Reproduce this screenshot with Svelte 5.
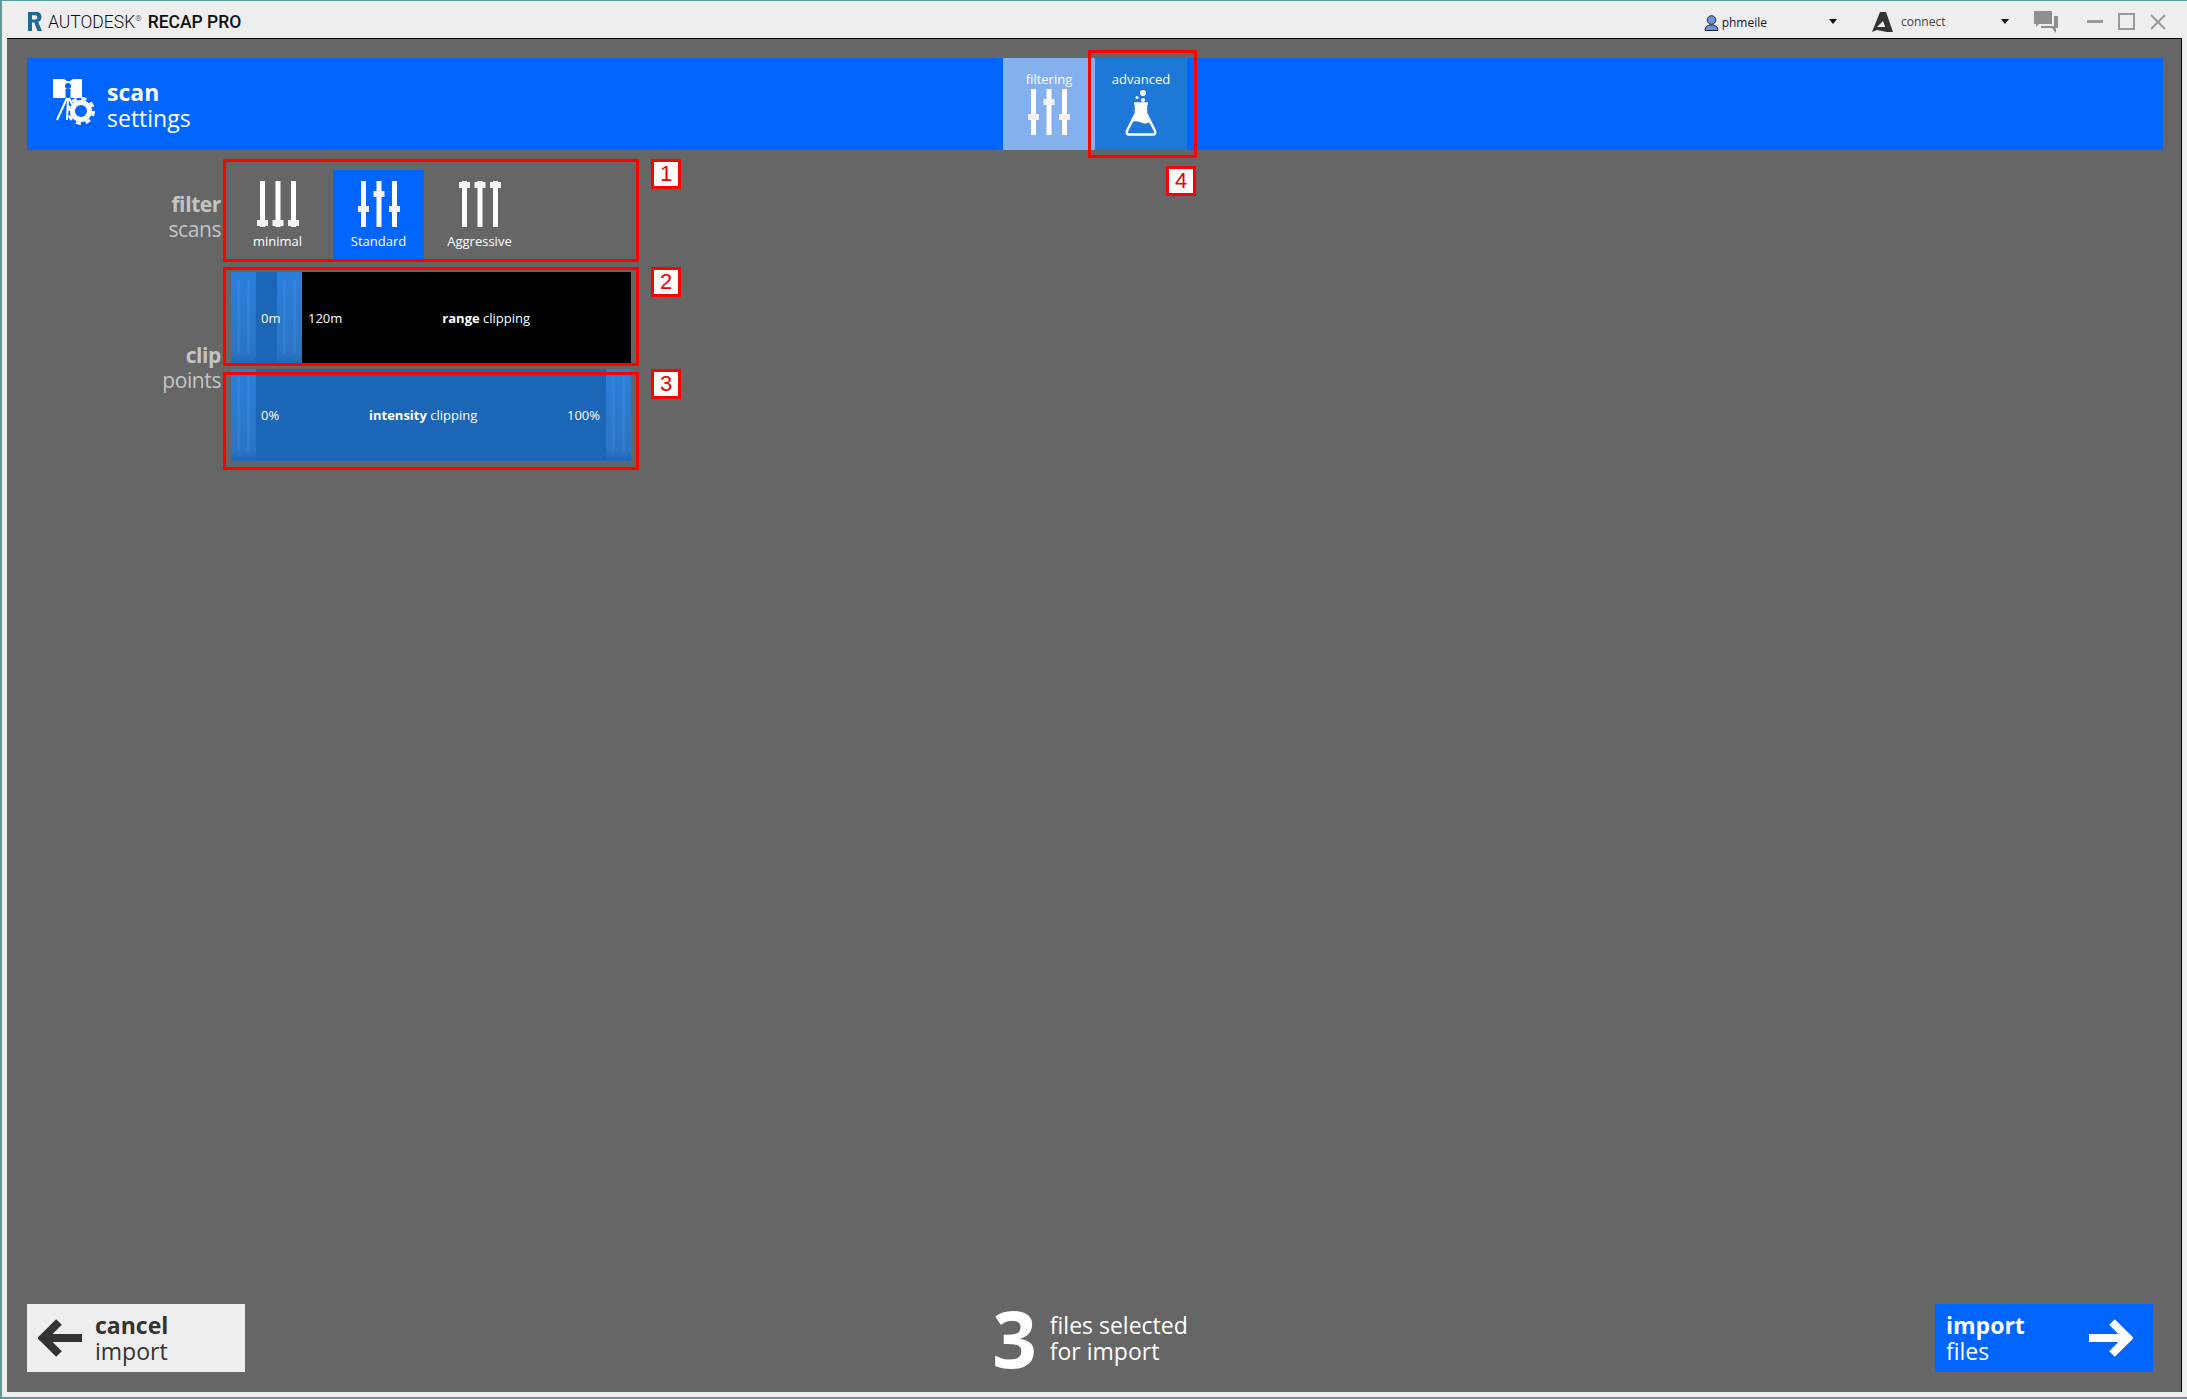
<script>
  const filters = [
    { label: 'minimal', knobs: [42, 42, 42] },
    { label: 'Standard', knobs: [28, 13, 28], active: true },
    { label: 'Aggressive', knobs: [4, 4, 4] }
  ];
  const marks = [
    { n: 1, cls: 'm1' },
    { n: 2, cls: 'm2' },
    { n: 3, cls: 'm3' },
    { n: 4, cls: 'm4' }
  ];
  const bars = [5.5, 21, 36.5];
</script>

{#snippet sliders(knobs)}
  <svg class="sliders" viewBox="0 0 42 46" aria-hidden="true">
    {#each bars as x, i}
      <rect x={x - 2.5} y="0" width="5" height="46" fill="#fff" />
      <rect x={x - 5.5} y={knobs[i] - 3} width="11" height="6" fill="#f2f2f2" />
    {/each}
  </svg>
{/snippet}

<div class="window">
  <div class="frame">
    <header class="titlebar">
      <div class="brand">
        <svg class="r-logo" viewBox="0 0 15 19" aria-hidden="true">
          <path d="M1 0h8.500c3.500 0 5 2.200 5 5 0 2.600-1.300 4.300-3.300 4.900L15 19h-4.600L7.300 10.500H5V19H1z M5 3.200v4.300h3.300c1.300 0 2-.9 2-2.200s-.7-2.100-2-2.100z" fill="#1d6a94" fill-rule="evenodd" />
        </svg>
        <span class="brand-thin">AUTODESK<sup>®</sup></span>
        <span class="brand-bold">RECAP PRO</span>
      </div>
      <div class="win-tools">
        <div class="user">
          <svg class="person" viewBox="0 0 15 16" aria-hidden="true">
            <circle cx="7.500" cy="5" r="4.300" fill="#6c93d8" stroke="#223" />
            <path d="M1 15.500c0-4 2.500-5.500 6.500-5.500s6.500 1.500 6.500 5.500z" fill="#6c93d8" stroke="#223" />
          </svg>
          <span>phmeile</span>
        </div>
        <i class="caret caret-a"></i>
        <svg class="a360" viewBox="0 0 21 20" aria-hidden="true">
          <path d="M8 0h6l7 20h-6L11 9 5 15l9 0 1 5-10-2-5 2z" fill="#333" />
        </svg>
        <span class="connect">connect</span>
        <i class="caret caret-b"></i>
        <svg class="chat" viewBox="0 0 24 22" aria-hidden="true">
          <path d="M0 0h18v13H5l-3 3v-3H0z" fill="#8f8f8f" />
          <path d="M20 5h4v12h-2v5l-4-5H7v-2h13z" fill="#8f8f8f" />
        </svg>
        <i class="min"></i>
        <i class="max"></i>
        <svg class="close" viewBox="0 0 16 16" aria-hidden="true">
          <path d="M1 1l14 14M15 1L1 15" stroke="#999" stroke-width="2" fill="none" />
        </svg>
      </div>
    </header>

    <main class="content">
      <section class="banner">
        <svg class="scan-icon" viewBox="0 0 44 52" aria-hidden="true">
          <path d="M1 1h11l3 2h3l3-2h9v19H1z" fill="#fff" />
          <circle cx="16" cy="8" r="3" fill="#06f" />
          <rect x="13.500" y="11" width="5" height="9" fill="#06f" />
          <path d="M15 20L5 42M16 20l-1 22M17 20l5 10" stroke="#fff" stroke-width="2" fill="none" />
          <circle cx="29" cy="33" r="8.500" fill="none" stroke="#fff" stroke-width="5" />
          <circle cx="29" cy="33" r="12.500" fill="none" stroke="#fff" stroke-width="3" stroke-dasharray="5 4.820" />
        </svg>
        <div class="two-line banner-title">
          <b>scan</b>
          <span>settings</span>
        </div>
        <nav class="tabs">
          <div class="tab tab-filtering">
            <span>filtering</span>
            {@render sliders([28, 13, 28])}
          </div>
          <div class="tab tab-advanced">
            <span>advanced</span>
            <svg class="flask" viewBox="0 0 32 46" aria-hidden="true">
              <circle cx="18" cy="3" r="3" fill="#fff" />
              <circle cx="18" cy="10" r="2" fill="#fff" />
              <circle cx="12" cy="7.500" r="1.500" fill="#fff" />
              <path d="M9 13.500h14" stroke="#fff" stroke-width="2.500" />
              <path d="M11 14v9L2 41q-1 3.500 2 3.500h24q3 0 2-3.500L21 23v-9" fill="none" stroke="#fff" stroke-width="2.500" />
              <path d="M11 14h10v9l4.500 9q-5 2.500-9.500 .5t-9.500-.5L11 23z" fill="#fff" />
            </svg>
          </div>
        </nav>
      </section>

      <div class="settings">
        <div class="row row-filter">
          <div class="two-line side-label">
            <b>filter</b>
            <span>scans</span>
          </div>
          <div class="options">
            {#each filters as f}
              <div class="option" class:active={f.active}>
                {@render sliders(f.knobs)}
                <span>{f.label}</span>
              </div>
            {/each}
          </div>
        </div>

        <div class="row row-clip">
          <div class="two-line side-label clip-label">
            <b>clip</b>
            <span>points</span>
          </div>
          <div class="clips">
            <div class="clip range">
              <div class="range-fill">
                <i class="handle"></i>
                <span class="val-low">0m</span>
                <i class="handle"></i>
              </div>
              <span class="val-max">120m</span>
              <span class="clip-name range-name"><b>range</b> clipping</span>
            </div>
            <div class="clip intensity">
              <i class="handle"></i>
              <span class="val-low">0%</span>
              <span class="clip-name intensity-name"><b>intensity</b> clipping</span>
              <span class="val-high">100%</span>
              <i class="handle"></i>
            </div>
          </div>
        </div>
      </div>

      <footer class="actions">
        <button class="action cancel">
          <svg class="arrow" viewBox="0 0 44 38" aria-hidden="true">
            <path d="M44 19H5M21 3L5 19l16 16" fill="none" stroke="#333" stroke-width="8" />
          </svg>
          <span class="two-line"><b>cancel</b><span>import</span></span>
        </button>
        <div class="count">
          <b>3</b>
          <span class="two-line"><span>files selected</span><span>for import</span></span>
        </div>
        <button class="action go">
          <span class="two-line"><b>import</b><span>files</span></span>
          <svg class="arrow" viewBox="0 0 44 38" aria-hidden="true">
            <path d="M0 19h39M23 3l16 16-16 16" fill="none" stroke="#fff" stroke-width="8" />
          </svg>
        </button>
      </footer>

      {#each marks as m}
        <div class="mark-box {m.cls}"></div>
        <div class="mark-tag {m.cls}">{m.n}</div>
      {/each}
    </main>
  </div>
</div>

<style>
  :global(body) {
    margin: 0;
    background: #4a3b2a;
  }

  .window {
    width: 2187px;
    height: 1399px;
    box-sizing: border-box;
    padding: 1px 0 2px 2px;
    background: #5a9a9a;
    display: flex;
    font-family: "Open Sans", "Noto Sans", sans-serif;
    overflow: hidden;
  }

  .frame {
    flex: 1;
    min-width: 0;
    background: #eee;
    display: flex;
    flex-direction: column;
  }

  .titlebar {
    height: 37px;
    flex: none;
    box-sizing: border-box;
    padding-top: 4px;
    display: flex;
    justify-content: space-between;
    align-items: center;
  }

  .brand {
    display: flex;
    align-items: center;
    padding-left: 25px;
    color: #111;
    font-family: "Roboto", sans-serif;
    font-size: 17.500px;
    line-height: 20px;
  }

  .r-logo {
    width: 15px;
    height: 19px;
    margin-right: 6px;
  }

  .brand-thin {
    font-weight: 300;
    margin-right: 6px;
  }

  .brand-thin sup {
    font-size: 8px;
    line-height: 0;
  }

  .brand-bold {
    font-weight: 500;
  }

  .win-tools {
    display: flex;
    align-items: center;
    height: 100%;
    padding-right: 21px;
  }

  .user {
    display: flex;
    align-items: center;
    gap: 3px;
    font-size: 12px;
    color: #201028;
    padding-top: 2px;
  }

  .person {
    width: 15px;
    height: 16px;
  }

  .caret {
    width: 0;
    height: 0;
    border-left: 4.500px solid transparent;
    border-right: 4.500px solid transparent;
    border-top: 5px solid #111;
  }

  .caret-a {
    margin: 0 35px 0 62px;
  }

  .caret-b {
    margin: 0 25px 0 55px;
  }

  .a360 {
    width: 21px;
    height: 20px;
    margin-right: 8px;
  }

  .connect {
    font-size: 12px;
    color: #444;
    width: 45px;
    white-space: nowrap;
  }

  .chat {
    width: 24px;
    height: 22px;
    margin-right: 29px;
  }

  .min {
    width: 16px;
    height: 3px;
    background: #999;
    margin-right: 15px;
  }

  .max {
    width: 13px;
    height: 13px;
    border: 2px solid #999;
    margin-right: 15px;
  }

  .close {
    width: 16px;
    height: 16px;
  }

  .content {
    position: relative;
    flex: 1;
    min-height: 0;
    margin: 0 5px 5px 5px;
    border-top: 1px solid #000;
    border-right: 1px solid #000;
    background: #666;
    padding: 19px 18px 20px 20px;
    display: flex;
    flex-direction: column;
    box-sizing: border-box;
  }

  .two-line {
    display: flex;
    flex-direction: column;
    font-size: 23px;
    line-height: 26px;
  }

  .two-line b {
    font-weight: 700;
  }

  .banner {
    height: 92px;
    flex: none;
    display: flex;
    align-items: center;
    background: #0066ff;
    color: #fff;
    padding-left: 25px;
  }

  .scan-icon {
    width: 44px;
    height: 52px;
    margin-right: 11px;
  }

  .banner-title {
    width: 896px;
    padding-top: 2px;
  }

  .tabs {
    display: flex;
    align-self: stretch;
  }

  .tab {
    display: flex;
    flex-direction: column;
    align-items: center;
    box-sizing: border-box;
    width: 92px;
    font-size: 13px;
    padding-top: 11px;
    line-height: 20px;
  }

  .tab-filtering {
    background: #84b1ee;
  }

  .tab-advanced {
    background: #1e78d8;
  }

  .sliders {
    width: 42px;
    height: 46px;
  }

  .flask {
    width: 32px;
    height: 46px;
    margin-top: 1px;
  }

  .settings {
    display: flex;
    flex-direction: column;
    margin-top: 20px;
  }

  .row {
    display: flex;
  }

  .side-label {
    width: 194px;
    align-items: flex-end;
    color: #c4c4c4;
    font-size: 21px;
    line-height: 25px;
    padding-top: 22px;
    flex: none;
    letter-spacing: -0.4px;
  }

  .clip-label {
    padding-top: 83px;
  }

  .options {
    display: flex;
    margin-left: 11px;
    gap: 10px;
  }

  .option {
    width: 91px;
    height: 90px;
    box-sizing: border-box;
    padding-top: 11px;
    display: flex;
    flex-direction: column;
    align-items: center;
    color: #fff;
    font-size: 13px;
    line-height: 18px;
    gap: 5px;
  }

  .option.active {
    background: #0066ff;
  }

  .clips {
    display: flex;
    flex-direction: column;
    width: 400px;
    margin-left: 10px;
    margin-top: 12px;
    gap: 5px;
    color: #fff;
    font-size: 13px;
  }

  .clip {
    display: flex;
    align-items: center;
    height: 92px;
  }

  .clip b {
    font-weight: 700;
  }

  .range {
    background: #000;
  }

  .range-fill {
    width: 71px;
    height: 100%;
    display: flex;
    align-items: center;
    justify-content: space-between;
    background: #1b66b7;
    flex: none;
  }

  .intensity {
    background: #1b66b7;
  }

  .handle {
    width: 25px;
    height: 100%;
    flex: none;
    background:
      linear-gradient(to right, rgba(255, 255, 255, 0.05) 3px, transparent 3px, transparent 10px, rgba(255, 255, 255, 0.05) 10px) 6px 8px / 13px calc(100% - 18px) no-repeat,
      linear-gradient(to bottom, #2a7fdc, #2b74c6 88%, #1e67b8);
  }

  .val-low {
    width: 21px;
    white-space: nowrap;
  }

  .range-fill .val-low {
    margin-left: 5px;
    margin-right: -5px;
    position: relative;
  }

  .intensity .val-low {
    margin-left: 5px;
  }

  .val-max {
    margin-left: 6px;
  }

  .clip-name {
    white-space: nowrap;
  }

  .range-name {
    margin-left: 100px;
  }

  .intensity-name {
    margin-left: 87px;
  }

  .val-high {
    margin-left: auto;
    margin-right: 6px;
  }

  .actions {
    margin-top: auto;
    display: flex;
    justify-content: space-between;
    align-items: center;
    padding-right: 10px;
  }

  .action {
    width: 218px;
    height: 68px;
    border: 0;
    padding: 0 20px 0 11px;
    display: flex;
    align-items: center;
    font-family: inherit;
    text-align: left;
  }

  .cancel {
    background: #eee;
    color: #333;
    gap: 13px;
  }

  .go {
    background: #0066ff;
    color: #fff;
    justify-content: space-between;
  }

  .arrow {
    width: 44px;
    height: 38px;
    flex: none;
  }

  .count {
    display: flex;
    align-items: center;
    color: #fff;
    gap: 13px;
  }

  .count > b {
    font-size: 78px;
    line-height: 68px;
    font-weight: 700;
  }

  .mark-box {
    position: absolute;
    box-sizing: border-box;
    border: 3px solid #f00;
    pointer-events: none;
  }

  .mark-tag {
    position: absolute;
    box-sizing: border-box;
    width: 30px;
    height: 30px;
    border: 3px solid #f00;
    background: #fff;
    color: #e00;
    font-family: "Liberation Sans", sans-serif;
    font-size: 22px;
    line-height: 24px;
    text-align: center;
  }

  .mark-box.m1 { left: 216px; top: 120px; width: 416px; height: 103px; }
  .mark-box.m2 { left: 216px; top: 228px; width: 416px; height: 99px; }
  .mark-box.m3 { left: 216px; top: 333px; width: 416px; height: 98px; }
  .mark-box.m4 { left: 1081px; top: 11px; width: 109px; height: 108px; }
  .mark-tag.m1 { left: 644px; top: 120px; }
  .mark-tag.m2 { left: 644px; top: 228px; }
  .mark-tag.m3 { left: 644px; top: 330px; }
  .mark-tag.m4 { left: 1159px; top: 127px; }
</style>
